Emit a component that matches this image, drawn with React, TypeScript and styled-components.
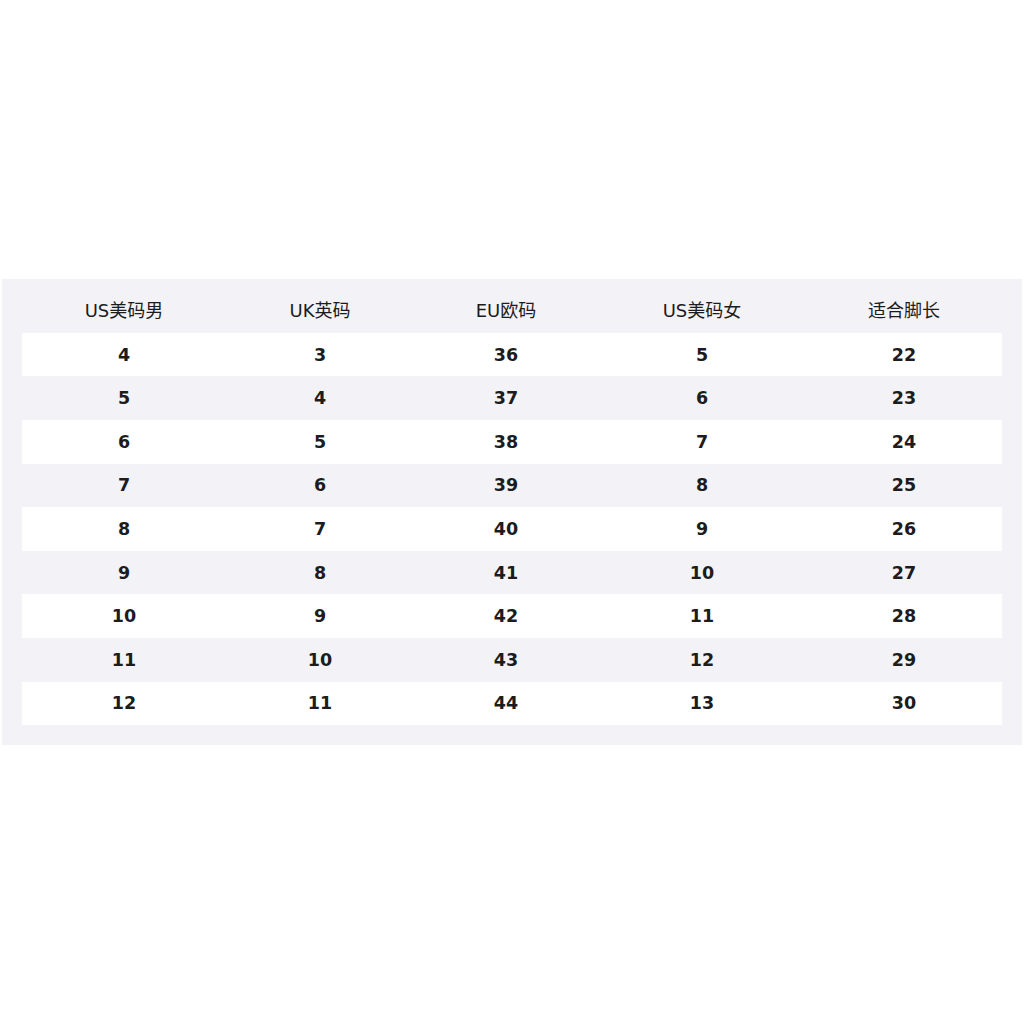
import styled, { createGlobalStyle } from 'styled-components';

const GlobalStyle = createGlobalStyle`
  html, body {
    margin: 0;
    padding: 0;
    background: #ffffff;
  }
`;

const Page = styled.div`
  height: 1024px;
  display: flex;
  align-items: center;
  justify-content: center;
`;

const Panel = styled.div`
  width: 980px;
  padding: 0 20px 20px;
  background: #f3f3f7;
  font-family: 'DejaVu Sans', 'Noto Sans CJK SC', sans-serif;
  color: #1c1c1c;
`;

const Row = styled.div<{ $header?: boolean; $white?: boolean }>`
  display: grid;
  grid-template-columns: 204px 188px 184px 208px 196px;
  align-items: center;
  box-sizing: border-box;
  height: ${(p) => (p.$header ? '54px' : '43.6px')};
  padding-top: ${(p) => (p.$header ? '6px' : '0')};
  background: ${(p) => (p.$white ? '#ffffff' : 'transparent')};
  font-size: ${(p) => (p.$header ? '18px' : '17.5px')};
  font-weight: ${(p) => (p.$header ? 400 : 700)};
`;

const Cell = styled.div`
  text-align: center;
`;

const headers = ['US美码男', 'UK英码', 'EU欧码', 'US美码女', '适合脚长'];

const rows = [
  [4, 3, 36, 5, 22],
  [5, 4, 37, 6, 23],
  [6, 5, 38, 7, 24],
  [7, 6, 39, 8, 25],
  [8, 7, 40, 9, 26],
  [9, 8, 41, 10, 27],
  [10, 9, 42, 11, 28],
  [11, 10, 43, 12, 29],
  [12, 11, 44, 13, 30],
];

const App = () => (
  <>
    <GlobalStyle />
    <Page>
      <Panel>
        <Row $header>
          {headers.map((h) => (
            <Cell key={h}>{h}</Cell>
          ))}
        </Row>
        {rows.map((r, i) => (
          <Row key={i} $white={i % 2 === 0}>
            {r.map((v, j) => (
              <Cell key={j}>{v}</Cell>
            ))}
          </Row>
        ))}
      </Panel>
    </Page>
  </>
);

export default App;
